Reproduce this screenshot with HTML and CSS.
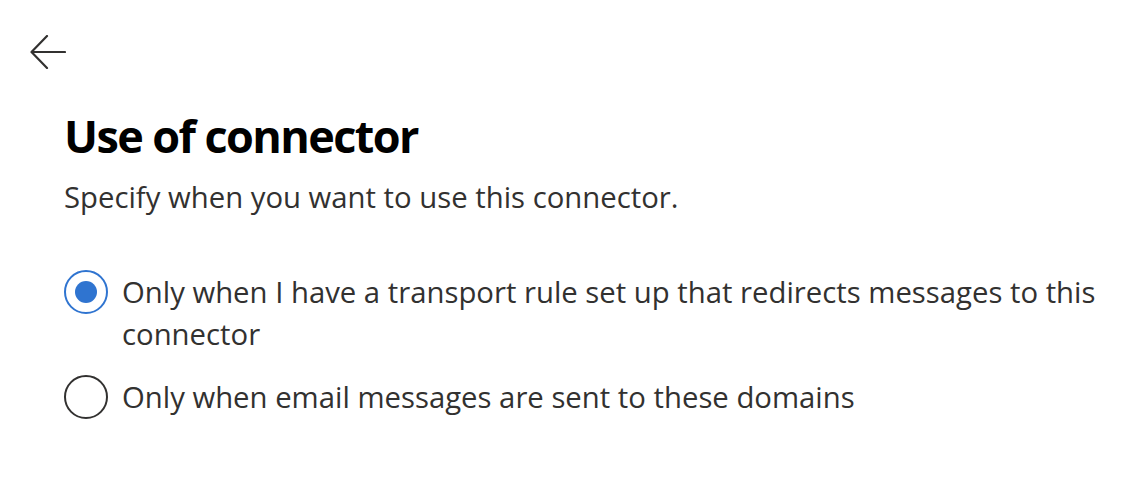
FILE: index.html
```html
<!DOCTYPE html>
<html lang="en">
<head>
<meta charset="utf-8">
<title>Use of connector</title>
<link rel="stylesheet" href="styles.css">
</head>
<body>
<div class="page">
  <button class="back" type="button" aria-label="Back">
    <svg width="36" height="34" viewBox="0 0 36 34" fill="none" stroke="#323130" stroke-width="2.2" stroke-linecap="round" stroke-linejoin="round">
      <path d="M35 17H2"/>
      <path d="M17 1L1.5 17L17 33"/>
    </svg>
  </button>
  <div class="content">
    <h1 class="title">Use of connector</h1>
    <p class="desc">Specify when you want to use this connector.</p>
    <div class="options" role="radiogroup">
      <label class="option">
        <span class="radio is-checked"><span class="dot"></span></span>
        <span class="label">Only when I have a transport rule set up that redirects messages to this connector</span>
      </label>
      <label class="option">
        <span class="radio"></span>
        <span class="label">Only when email messages are sent to these domains</span>
      </label>
    </div>
  </div>
</div>
</body>
</html>
```
FILE: styles.css
```css
html, body {
  margin: 0;
  padding: 0;
  background: #ffffff;
}

body {
  font-family: "Open Sans", "Noto Sans", "Liberation Sans", sans-serif;
  color: #323130;
}

.page {
  padding: 35px 30px 0 30px;
}

.back {
  display: block;
  padding: 0;
  margin: 0;
  border: 0;
  background: transparent;
  width: 36px;
  height: 34px;
}

.back svg {
  display: block;
}

.content {
  padding-left: 34px;
  width: 1044px;
}

.title {
  margin: 39px 0 0 0;
  font-family: "Open Sans", "Noto Sans", sans-serif;
  font-size: 45px;
  letter-spacing: -1.6px;
  line-height: 56px;
  font-weight: 700;
  color: #000000;
}

.desc {
  margin: 12px 0 0 0;
  font-size: 29.3px;
  line-height: 42px;
}

.options {
  margin-top: 53px;
  display: flex;
  flex-direction: column;
  gap: 21px;
}

.option {
  display: flex;
  align-items: flex-start;
  gap: 14px;
}

.radio {
  flex: none;
  box-sizing: border-box;
  width: 44px;
  height: 44px;
  border: 2px solid #323130;
  border-radius: 50%;
  margin-top: -1px;
  display: flex;
  align-items: center;
  justify-content: center;
}

.radio.is-checked {
  border-color: #2f74d0;
}

.dot {
  width: 22px;
  height: 22px;
  border-radius: 50%;
  background: #2f74d0;
}

.label {
  font-size: 29.3px;
  line-height: 42px;
}
```
